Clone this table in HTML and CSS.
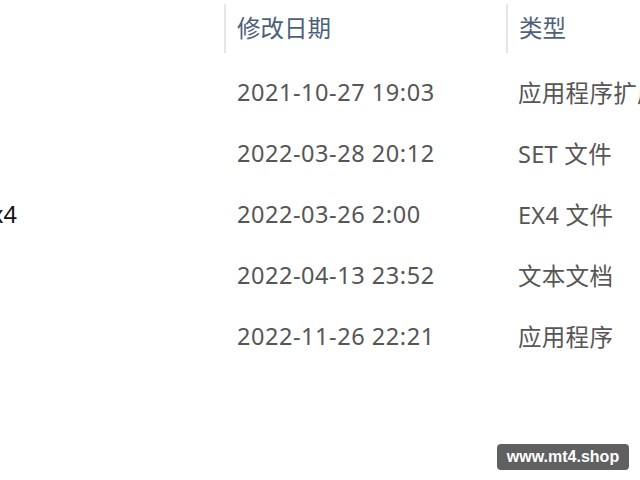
FILE: index.html
```html
<!DOCTYPE html>
<html lang="zh-CN">
<head>
<meta charset="utf-8">
<link rel="stylesheet" href="styles.css">
</head>
<body>
<div class="list">
  <div class="row header">
    <div class="cell name"></div>
    <div class="cell hcell">修改日期</div>
    <div class="cell hcell">类型</div>
  </div>
  <div class="row">
    <div class="cell name"></div>
    <div class="cell date">2021-10-27 19:03</div>
    <div class="cell type">应用程序扩展</div>
  </div>
  <div class="row">
    <div class="cell name"></div>
    <div class="cell date">2022-03-28 20:12</div>
    <div class="cell type">SET 文件</div>
  </div>
  <div class="row">
    <div class="cell name"><span class="fname">Expert.ex4</span></div>
    <div class="cell date">2022-03-26 2:00</div>
    <div class="cell type">EX4 文件</div>
  </div>
  <div class="row">
    <div class="cell name"></div>
    <div class="cell date">2022-04-13 23:52</div>
    <div class="cell type">文本文档</div>
  </div>
  <div class="row">
    <div class="cell name"></div>
    <div class="cell date">2022-11-26 22:21</div>
    <div class="cell type">应用程序</div>
  </div>
</div>
<div class="watermark">www.mt4.shop</div>
</body>
</html>
```
FILE: styles.css
```css
html, body {
  margin: 0;
  padding: 0;
  background: #ffffff;
  overflow: hidden;
  width: 640px;
  height: 480px;
}
body {
  font-family: "Noto Sans", "Noto Sans CJK SC", sans-serif;
  font-size: 23.5px;
}
.list {
  margin-left: -200px;
  display: flex;
  flex-direction: column;
}
.row {
  display: grid;
  grid-template-columns: 424px 282px 400px;
  height: 61px;
  align-items: center;
}
.row.header {
  height: 62px;
  align-items: start;
}
.cell {
  white-space: nowrap;
  overflow: hidden;
  padding-bottom: 2px;
}
.hcell {
  margin-top: 4px;
  height: 49px;
  box-sizing: border-box;
  border-left: 2px solid #e6e6e6;
  padding-left: 11px;
  padding-bottom: 4px;
  display: flex;
  align-items: center;
  color: #4c607a;
}
.date {
  padding-left: 13px;
  color: #565656;
  letter-spacing: 0.55px;
}
.type {
  padding-left: 12px;
  color: #565656;
  letter-spacing: 0.3px;
}
.name {
  text-align: right;
  padding-right: 207px;
  color: #111;
}
.watermark {
  position: absolute;
  left: 497px;
  top: 444px;
  width: 132px;
  height: 26px;
  border-radius: 4px;
  background: #606060;
  color: #ffffff;
  font-family: "Liberation Sans", Arial, sans-serif;
  font-weight: bold;
  font-size: 16px;
  line-height: 26px;
  text-align: center;
}
```
